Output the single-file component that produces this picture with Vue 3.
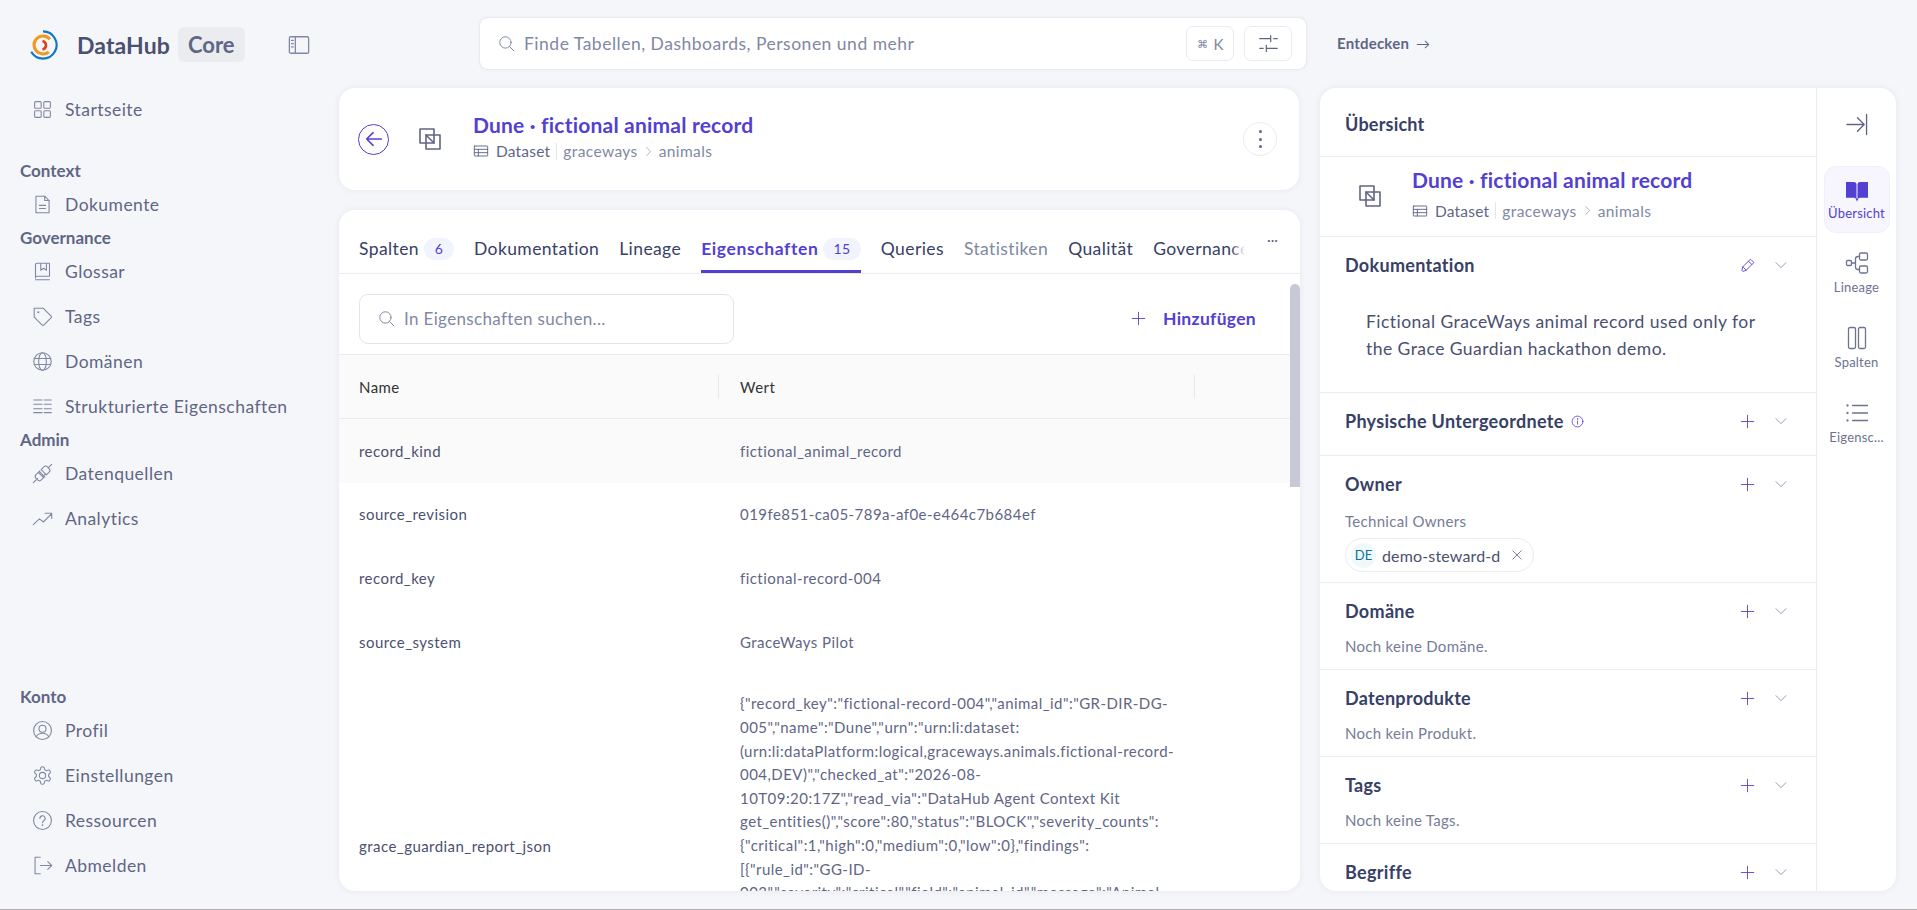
<script setup>
const icons = {
  grid: '<rect x="3" y="3" width="7.5" height="7.5" rx="1.2"/><rect x="13.5" y="3" width="7.5" height="7.5" rx="1.2"/><rect x="3" y="13.5" width="7.5" height="7.5" rx="1.2"/><rect x="13.5" y="13.5" width="7.5" height="7.5" rx="1.2"/>',
  doc: '<path d="M4.5 2.5h10l5 5v14h-15z"/><path d="M14.5 2.5v5h5M8.5 13h7M8.5 16.5h7"/>',
  glossary: '<path d="M4 18.5V4a1.5 1.5 0 0 1 1.5-1.5H20v15H5.5A1.5 1.5 0 0 0 4 19v.5M4 21.5h16M10 2.5v8l3.2-2.2 3.3 2.2v-8"/>',
  tag: '<path d="M2.5 2.5h10.2l9.2 9.2a1.2 1.2 0 0 1 0 1.7l-8.5 8.5a1.2 1.2 0 0 1-1.7 0l-9.2-9.2z"/><circle cx="7.2" cy="7.2" r=".6"/>',
  globe: '<circle cx="12" cy="12" r="10"/><ellipse cx="12" cy="12" rx="4.4" ry="10"/><path d="M2.6 8.5h18.8M2.6 15.5h18.8"/>',
  rows: '<path d="M2 4.5h9.5M14 4.5h8M2 9.5h9.5M14 9.5h8M2 14.5h9.5M14 14.5h8M2 19h9.5M14 19h8"/>',
  plug: '<path d="M1.5 22.5l5-5M22.5 1.5l-4 4M8.8 10.2l6 6M10.5 7.5l6 6 3-3a3 3 0 0 0 0-4.2l-1.8-1.8a3 3 0 0 0-4.2 0zM7.2 10.8l6 6-2.6 2.6a3 3 0 0 1-4.2 0l-1.8-1.8a3 3 0 0 1 0-4.2zM9 9l-2 2M13 15l2-2"/>',
  trend: '<path d="M1.5 19l7-6.5 4.5 3.5 9-9M15 6h7.5v6"/>',
  user: '<circle cx="12" cy="12" r="10.2"/><circle cx="12" cy="10" r="4"/><path d="M4.8 19.2c1.4-2.6 4-4 7.2-4s5.8 1.4 7.2 4"/>',
  gear: '<path d="M12.22 2h-.44a2 2 0 0 0-2 2v.18a2 2 0 0 1-1 1.73l-.43.25a2 2 0 0 1-2 0l-.15-.08a2 2 0 0 0-2.73.73l-.22.38a2 2 0 0 0 .73 2.73l.15.1a2 2 0 0 1 1 1.72v.51a2 2 0 0 1-1 1.74l-.15.09a2 2 0 0 0-.73 2.73l.22.38a2 2 0 0 0 2.73.73l.15-.08a2 2 0 0 1 2 0l.43.25a2 2 0 0 1 1 1.73V20a2 2 0 0 0 2 2h.44a2 2 0 0 0 2-2v-.18a2 2 0 0 1 1-1.73l.43-.25a2 2 0 0 1 2 0l.15.08a2 2 0 0 0 2.73-.73l.22-.39a2 2 0 0 0-.73-2.73l-.15-.08a2 2 0 0 1-1-1.74v-.5a2 2 0 0 1 1-1.74l.15-.09a2 2 0 0 0 .73-2.73l-.22-.38a2 2 0 0 0-2.73-.73l-.15.08a2 2 0 0 1-2 0l-.43-.25a2 2 0 0 1-1-1.73V4a2 2 0 0 0-2-2z"/><circle cx="12" cy="12" r="3.6"/>',
  question: '<circle cx="12" cy="12" r="10.2"/><path d="M9 9.6a3 3 0 1 1 4.4 2.7c-.9.5-1.4 1.1-1.4 2.2"/><circle cx="12" cy="17.4" r=".4"/>',
  signout: '<path d="M9.5 2.5H3.5v19h6M9.5 12h13M18 7.5l4.5 4.5-4.5 4.5"/>',
  search: '<circle cx="10.5" cy="10.5" r="8"/><path d="M16.3 16.3l6 6"/>',
  sidebar: '<rect x="1.5" y="3" width="21" height="18" rx="1.5"/><path d="M8 3v18M3.8 7h2M3.8 10.5h2M3.8 14h2"/>',
  sliders: '<path d="M2 6.5h12M18 6.5h4M14.5 3v7M2 17.5h4M10 17.5h12M9.5 14v7"/>',
  back: '<path d="M20 12H4M11 5l-7 7 7 7"/>',
  overlap: '<rect x="2" y="2" width="14" height="14"/><rect x="8" y="8" width="14" height="14"/><path d="M8 8l8 8"/>',
  table: '<rect x="2" y="4.5" width="20" height="15" rx=".6"/><path d="M2 9.5h20M2 14.5h20M8 9.5v10"/>',
  chevronR: '<path d="M8.5 3.5l8 8.5-8 8.5"/>',
  chevronD: '<path d="M3.5 8l8.5 8.5L20.5 8"/>',
  plus: '<path d="M12 2v20M2 12h20"/>',
  pencil: '<path d="M4 21l-1-1 1.5-6L15.8 2.8a1.4 1.4 0 0 1 2 0l3.4 3.4a1.4 1.4 0 0 1 0 2L10 19.5zM13.5 5l5.5 5.5M4.5 14l5.5 5.5"/>',
  info: '<circle cx="12" cy="12" r="10"/><path d="M12 11v6"/><circle cx="12" cy="7.3" r=".4"/>',
  close: '<path d="M5 5l14 14M19 5L5 19"/>',
  collapse: '<path d="M2 12h18M13 5l7 7-7 7M22.5 1.5v21"/>',
  bookFill: '<path fill="currentColor" stroke="none" d="M1 3h7.5c1.8 0 3 .8 3 2.5V20c-.8-.8-1.8-1.2-3-1.2H1zM23 3h-7.5c-1.8 0-3 .8-3 2.5V20c.8-.8 1.8-1.2 3-1.2H23zM10.5 19.5h3L12 22.5z"/>',
  tree: '<rect x="1.5" y="9.5" width="5" height="5" rx="1.2"/><rect x="14.5" y="2" width="8" height="7" rx="1.5"/><rect x="14.5" y="15" width="8" height="7" rx="1.5"/><path d="M6.5 12h4M14.5 5.5H13a2.5 2.5 0 0 0-2.5 2.5v8a2.5 2.5 0 0 0 2.5 2.5h1.5"/>',
  columns: '<rect x="3.5" y="1.5" width="7" height="21" rx="1.5"/><rect x="13.5" y="1.5" width="7" height="21" rx="1.5"/>',
  list: '<path d="M7.5 4.5h15M7.5 12h15M7.5 19.5h15"/><circle cx="2.5" cy="4.5" r=".5"/><circle cx="2.5" cy="12" r=".5"/><circle cx="2.5" cy="19.5" r=".5"/>'
}

const navGroups = [
  { items: [{ label: 'Startseite', icon: 'grid' }] },
  { title: 'Context', items: [{ label: 'Dokumente', icon: 'doc' }] },
  { title: 'Governance', items: [
    { label: 'Glossar', icon: 'glossary' },
    { label: 'Tags', icon: 'tag' },
    { label: 'Domänen', icon: 'globe' },
    { label: 'Strukturierte Eigenschaften', icon: 'rows' }
  ] },
  { title: 'Admin', items: [
    { label: 'Datenquellen', icon: 'plug' },
    { label: 'Analytics', icon: 'trend' }
  ] }
]

const accountItems = [
  { label: 'Profil', icon: 'user' },
  { label: 'Einstellungen', icon: 'gear' },
  { label: 'Ressourcen', icon: 'question' },
  { label: 'Abmelden', icon: 'signout' }
]

const tabs = [
  { label: 'Spalten', count: 6 },
  { label: 'Dokumentation' },
  { label: 'Lineage' },
  { label: 'Eigenschaften', count: 15, active: true },
  { label: 'Queries' },
  { label: 'Statistiken', disabled: true },
  { label: 'Qualität' },
  { label: 'Governance' }
]

const rows = [
  { name: 'record_kind', value: 'fictional_animal_record', hover: true },
  { name: 'source_revision', value: '019fe851-ca05-789a-af0e-e464c7b684ef' },
  { name: 'record_key', value: 'fictional-record-004' },
  { name: 'source_system', value: 'GraceWays Pilot' }
]

const reportLines = [
  '{"record_key":"fictional-record-004","animal_id":"GR-DIR-DG-',
  '005","name":"Dune","urn":"urn:li:dataset:',
  '(urn:li:dataPlatform:logical,graceways.animals.fictional-record-',
  '004,DEV)","checked_at":"2026-08-',
  '10T09:20:17Z","read_via":"DataHub Agent Context Kit',
  'get_entities()","score":80,"status":"BLOCK","severity_counts":',
  '{"critical":1,"high":0,"medium":0,"low":0},"findings":',
  '[{"rule_id":"GG-ID-',
  '003","severity":"critical","field":"animal_id","message":"Animal',
  'id","evidence":"GR-DIR-DG-005"}]}'
]

const sections = [
  { title: 'Domäne', empty: 'Noch keine Domäne.' },
  { title: 'Datenprodukte', empty: 'Noch kein Produkt.' },
  { title: 'Tags', empty: 'Noch keine Tags.' },
  { title: 'Begriffe' }
]

const railItems = [
  { label: 'Übersicht', icon: 'bookFill', active: true },
  { label: 'Lineage', icon: 'tree' },
  { label: 'Spalten', icon: 'columns' },
  { label: 'Eigensc...', icon: 'list' }
]
</script>

<template>
  <div class="page">
    <aside class="sidebar">
      <div class="brand">
        <svg class="logo" viewBox="0 0 30 30" fill="none">
          <path d="M15 1.4A13.6 13.6 0 1 1 3.2 21.8" stroke="#0c78c9" stroke-width="2.2"/>
          <path d="M21.9 9.2A9 9 0 1 0 20.8 21.9" stroke="#f09a24" stroke-width="3.2"/>
          <path d="M14.5 11A4.4 4.4 0 0 1 14.5 19.6" stroke="#d9401e" stroke-width="2.6"/>
        </svg>
        <span class="brand-name">DataHub</span>
        <span class="brand-badge">Core</span>
        <svg class="ico collapse-btn" viewBox="0 0 24 24" v-html="icons.sidebar"></svg>
      </div>

      <nav class="nav">
        <div v-for="(group, i) in navGroups" :key="i" class="nav-group">
          <div v-if="group.title" class="nav-title">{{ group.title }}</div>
          <a v-for="item in group.items" :key="item.label" class="nav-item">
            <svg class="ico nav-ico" viewBox="0 0 24 24" v-html="icons[item.icon]"></svg>
            {{ item.label }}
          </a>
        </div>
      </nav>

      <div class="nav-group account">
        <div class="nav-title">Konto</div>
        <a v-for="item in accountItems" :key="item.label" class="nav-item">
          <svg class="ico nav-ico" viewBox="0 0 24 24" v-html="icons[item.icon]"></svg>
          {{ item.label }}
        </a>
      </div>
    </aside>

    <div class="main">
      <header class="topbar">
        <div class="search">
          <svg class="ico search-ico" viewBox="0 0 24 24" v-html="icons.search"></svg>
          <span class="search-text">Finde Tabellen, Dashboards, Personen und mehr</span>
          <span class="kbd"><small>⌘</small> K</span>
          <span class="kbd filter">
            <svg class="ico" viewBox="0 0 24 24" v-html="icons.sliders"></svg>
          </span>
        </div>
        <span class="explore">Entdecken <span class="arrow">→</span></span>
      </header>

      <div class="content">
        <div class="left">
          <section class="card head-card">
            <span class="back-btn">
              <svg class="ico" viewBox="0 0 24 24" v-html="icons.back"></svg>
            </span>
            <svg class="ico entity-ico" viewBox="0 0 24 24" v-html="icons.overlap"></svg>
            <div class="entity">
              <div class="entity-title">Dune · fictional animal record</div>
              <div class="entity-sub">
                <svg class="ico table-ico" viewBox="0 0 24 24" v-html="icons.table"></svg>
                <span class="sub-type">Dataset</span>
                <span class="sub-div"></span>
                <span>graceways</span>
                <svg class="ico chev-r" viewBox="0 0 24 24" v-html="icons.chevronR"></svg>
                <span>animals</span>
              </div>
            </div>
            <span class="more-btn"><i></i><i></i><i></i></span>
          </section>

          <section class="card props-card">
            <div class="tabbar">
              <div class="tabs">
                <a v-for="tab in tabs" :key="tab.label" class="tab"
                   :class="{ active: tab.active, disabled: tab.disabled }">
                  {{ tab.label }}
                  <span v-if="tab.count" class="count">{{ tab.count }}</span>
                </a>
                <span class="tabs-fade"></span>
              </div>
              <span class="tabs-more">···</span>
            </div>

            <div class="props-body">
              <div class="toolbar">
                <div class="prop-search">
                  <svg class="ico search-ico" viewBox="0 0 24 24" v-html="icons.search"></svg>
                  In Eigenschaften suchen...
                </div>
                <a class="add-btn">
                  <svg class="ico" viewBox="0 0 24 24" v-html="icons.plus"></svg>
                  Hinzufügen
                </a>
              </div>

              <div class="t-row t-head">
                <div class="t-name">Name</div>
                <div class="t-val">Wert</div>
                <div class="t-last"></div>
              </div>
              <div v-for="row in rows" :key="row.name" class="t-row" :class="{ hover: row.hover }">
                <div class="t-name">{{ row.name }}</div>
                <div class="t-val">{{ row.value }}</div>
              </div>
              <div class="t-row t-big">
                <div class="t-name">grace_guardian_report_json</div>
                <div class="t-val">
                  <div v-for="line in reportLines" :key="line" class="json-line">{{ line }}</div>
                  <div class="json-line">&nbsp;</div>
                  <div class="json-line">&nbsp;</div>
                  <div class="json-line">&nbsp;</div>
                </div>
              </div>
              <span class="thumb"></span>
            </div>
          </section>
        </div>

        <section class="card side-card">
          <div class="side-main">
            <div class="side-head">Übersicht</div>
            <div class="side-entity">
              <svg class="ico entity-ico" viewBox="0 0 24 24" v-html="icons.overlap"></svg>
              <div class="entity">
                <div class="entity-title">Dune · fictional animal record</div>
                <div class="entity-sub side-sub">
                  <svg class="ico table-ico" viewBox="0 0 24 24" v-html="icons.table"></svg>
                  <span class="sub-type">Dataset</span>
                  <span class="sub-div"></span>
                  <span>graceways</span>
                  <svg class="ico chev-r" viewBox="0 0 24 24" v-html="icons.chevronR"></svg>
                  <span>animals</span>
                </div>
              </div>
            </div>

            <div class="sec sec-doc">
              <div class="sec-head">
                <span class="sec-title">Dokumentation</span>
                <svg class="ico act" viewBox="0 0 24 24" v-html="icons.pencil"></svg>
                <svg class="ico chev" viewBox="0 0 24 24" v-html="icons.chevronD"></svg>
              </div>
              <p class="doc-text">Fictional GraceWays animal record used only for the Grace Guardian hackathon demo.</p>
            </div>

            <div class="sec sec-physical">
              <div class="sec-head">
                <span class="sec-title">Physische Untergeordnete</span>
                <svg class="ico info" viewBox="0 0 24 24" v-html="icons.info"></svg>
                <svg class="ico act" viewBox="0 0 24 24" v-html="icons.plus"></svg>
                <svg class="ico chev" viewBox="0 0 24 24" v-html="icons.chevronD"></svg>
              </div>
            </div>

            <div class="sec sec-owner">
              <div class="sec-head">
                <span class="sec-title">Owner</span>
                <svg class="ico act" viewBox="0 0 24 24" v-html="icons.plus"></svg>
                <svg class="ico chev" viewBox="0 0 24 24" v-html="icons.chevronD"></svg>
              </div>
              <div class="sec-note owner-note">Technical Owners</div>
              <span class="chip">
                <span class="avatar">DE</span>
                <span class="chip-name">demo-steward-d</span>
                <svg class="ico chip-x" viewBox="0 0 24 24" v-html="icons.close"></svg>
              </span>
            </div>

            <div v-for="sec in sections" :key="sec.title" class="sec sec-plain">
              <div class="sec-head">
                <span class="sec-title">{{ sec.title }}</span>
                <svg class="ico act" viewBox="0 0 24 24" v-html="icons.plus"></svg>
                <svg class="ico chev" viewBox="0 0 24 24" v-html="icons.chevronD"></svg>
              </div>
              <div v-if="sec.empty" class="sec-note">{{ sec.empty }}</div>
            </div>
          </div>

          <div class="rail">
            <svg class="ico rail-close" viewBox="0 0 24 24" v-html="icons.collapse"></svg>
            <a v-for="item in railItems" :key="item.label" class="rail-item" :class="{ active: item.active }">
              <svg class="ico" viewBox="0 0 24 24" v-html="icons[item.icon]"></svg>
              <span>{{ item.label }}</span>
            </a>
          </div>
        </section>
      </div>
    </div>
  </div>
</template>

<style>
html, body {
  margin: 0;
  overflow: hidden;
}
</style>

<style scoped>
.page {
  display: flex;
  height: 909px;
  border-bottom: 1px solid #b5aeae;
  background: #f5f6fa;
  font-family: "Lato", "Noto Sans", sans-serif;
  color: #5f6685;
  overflow: hidden;
}
.ico {
  display: block;
  flex: none;
  fill: none;
  stroke: currentColor;
  stroke-width: 1.4;
  stroke-linecap: round;
  stroke-linejoin: round;
}

/* sidebar */
.sidebar {
  width: 339px;
  flex: none;
  box-sizing: border-box;
  padding: 27px 0 27px 20px;
  display: flex;
  flex-direction: column;
}
.brand {
  display: flex;
  align-items: center;
  height: 35px;
  padding-left: 8px;
}
.logo {
  width: 30px;
  height: 30px;
  margin-right: 19px;
  flex: none;
}
.brand-name {
  font-size: 23px;
  font-weight: 700;
  color: #4a5070;
  letter-spacing: 0.1px;
}
.brand-badge {
  margin-left: 8px;
  padding: 0 10px;
  height: 35px;
  line-height: 35px;
  border-radius: 6px;
  background: #ebecf0;
  font-size: 22px;
  font-weight: 700;
  color: #5f6685;
}
.collapse-btn {
  width: 22px;
  height: 22px;
  margin-left: 43px;
  color: #8088a3;
}
.nav {
  margin-top: 30px;
  display: flex;
  flex-direction: column;
}
.nav-group {
  display: flex;
  flex-direction: column;
  gap: 11px;
}
.nav-group:nth-child(2) {
  margin-top: 28px;
}
.nav-title {
  height: 33px;
  margin-bottom: -11px;
  line-height: 33px;
  font-size: 17px;
  font-weight: 700;
  color: #5f6685;
}
.nav-item {
  height: 34px;
  display: flex;
  align-items: center;
  gap: 12px;
  padding-left: 12px;
  font-size: 17.5px;
  letter-spacing: 0.45px;
  color: #5f6685;
}
.nav-ico {
  width: 21px;
  height: 21px;
  color: #8088a3;
  stroke-width: 1.25;
}
.account {
  margin-top: auto;
}

/* top */
.main {
  flex: 1;
  min-width: 0;
  display: flex;
  flex-direction: column;
  padding: 0 21px 18px 0;
}
.topbar {
  height: 88px;
  flex: none;
  display: flex;
  padding-left: 141px;
  box-sizing: border-box;
  padding-top: 18px;
}
.search {
  width: 826px;
  height: 51px;
  box-sizing: border-box;
  display: flex;
  align-items: center;
  padding: 0 14px 0 18px;
  background: #fff;
  border-radius: 8px;
  box-shadow: 0 0 3px rgba(60, 65, 100, 0.16);
}
.search-ico {
  width: 17px;
  height: 17px;
  color: #8088a3;
}
.search-text {
  flex: 1;
  margin-left: 9px;
  font-size: 17.5px;
  letter-spacing: 0.5px;
  color: #8088a3;
}
.kbd {
  width: 48px;
  height: 35px;
  box-sizing: border-box;
  display: flex;
  align-items: center;
  justify-content: center;
  gap: 6px;
  border: 1px solid #ebecf0;
  border-radius: 7px;
  font-size: 15px;
  color: #8088a3;
}
.kbd small {
  font-size: 11px;
}
.filter {
  margin-left: 10px;
  color: #5f6685;
}
.filter svg {
  width: 21px;
  height: 21px;
}
.explore {
  margin-left: 31px;
  height: 51px;
  line-height: 51px;
  font-size: 15px;
  font-weight: 700;
  letter-spacing: 0.2px;
  color: #5f6685;
  white-space: nowrap;
}
.arrow {
  margin-left: 3px;
  font-weight: 400;
  font-size: 14px;
}

/* cards */
.content {
  flex: 1;
  min-height: 0;
  display: flex;
  gap: 20px;
}
.left {
  width: 961px;
  flex: none;
  display: flex;
  flex-direction: column;
  gap: 20px;
}
.card {
  background: #fff;
  border-radius: 16px;
  box-shadow: 0 0 6px rgba(60, 65, 100, 0.08);
}
.head-card {
  height: 102px;
  flex: none;
  display: flex;
  align-items: center;
  margin-right: 1px;
  padding: 0 22px 0 19px;
}
.back-btn {
  width: 31px;
  height: 31px;
  box-sizing: border-box;
  display: flex;
  align-items: center;
  justify-content: center;
  border: 1px solid #533fd1;
  border-radius: 50%;
  color: #533fd1;
}
.back-btn svg {
  width: 22px;
  height: 22px;
  stroke-width: 1.7;
}
.entity-ico {
  width: 24px;
  height: 24px;
  margin-left: 29px;
  color: #5f6685;
  stroke-width: 1.6;
}
.entity {
  margin-left: 31px;
  flex: 1;
  min-width: 0;
}
.head-card .entity {
  padding-bottom: 6px;
}
.entity-title {
  font-size: 21px;
  font-weight: 700;
  color: #533fd1;
  letter-spacing: 0.2px;
  line-height: 28px;
}
.entity-sub {
  display: flex;
  align-items: center;
  height: 20px;
  margin-top: 2px;
  font-size: 15.5px;
  color: #8088a3;
  letter-spacing: 0.4px;
}
.side-sub {
  margin-top: 7px;
}
.table-ico {
  width: 16px;
  height: 16px;
  margin-right: 7px;
  color: #5f6685;
}
.sub-type {
  color: #5f6685;
  letter-spacing: 0.2px;
}
.sub-div {
  width: 1px;
  height: 17px;
  margin: 0 6px;
  background: #e4e5ea;
}
.chev-r {
  width: 11px;
  height: 11px;
  margin: 0 5px;
}
.more-btn {
  width: 34px;
  height: 34px;
  box-sizing: border-box;
  display: flex;
  flex-direction: column;
  align-items: center;
  justify-content: center;
  gap: 4.5px;
  border: 1px solid #ebecf0;
  border-radius: 50%;
}
.more-btn i {
  width: 3px;
  height: 3px;
  border-radius: 50%;
  background: #5f6685;
}

/* tabs */
.props-card {
  flex: 1;
  min-height: 0;
  display: flex;
  flex-direction: column;
  overflow: hidden;
}
.tabbar {
  height: 64px;
  flex: none;
  display: flex;
  box-sizing: border-box;
  border-bottom: 1px solid #ebecf0;
  padding-left: 20px;
}
.tabs {
  position: relative;
  flex: 1;
  min-width: 0;
  display: flex;
  gap: 20px;
  overflow: hidden;
  padding-top: 15px;
}
.tab {
  display: flex;
  align-items: flex-start;
  gap: 5px;
  height: 48px;
  box-sizing: border-box;
  flex: none;
  line-height: 48px;
  font-size: 17.5px;
  letter-spacing: 0.4px;
  color: #374066;
  white-space: nowrap;
}
.tab.disabled {
  color: #8088a3;
}
.tab.active {
  color: #533fd1;
  font-weight: 700;
  border-bottom: 3px solid #533fd1;
  letter-spacing: 0.6px;
}
.count {
  margin-top: 13px;
  min-width: 30px;
  box-sizing: border-box;
  padding: 0 10px;
  height: 22px;
  line-height: 22px;
  text-align: center;
  border-radius: 11px;
  background: #f1f3fd;
  color: #533fd1;
  font-size: 14px;
  font-weight: 400;
}
.tabs-fade {
  position: absolute;
  right: 0;
  top: 15px;
  bottom: 0;
  width: 14px;
  background: linear-gradient(to right, rgba(255, 255, 255, 0), #fff);
}
.tabs-more {
  width: 55px;
  flex: none;
  text-align: center;
  line-height: 60px;
  font-size: 14px;
  color: #5f6685;
}

/* table */
.props-body {
  position: relative;
  flex: 1;
  min-height: 0;
  overflow: hidden;
}
.toolbar {
  height: 80px;
  box-sizing: border-box;
  display: flex;
  align-items: center;
  justify-content: space-between;
  padding: 9px 44px 0 20px;
}
.prop-search {
  width: 375px;
  height: 50px;
  box-sizing: border-box;
  display: flex;
  align-items: center;
  gap: 9px;
  padding-left: 18px;
  border: 1px solid #e4e5ea;
  border-radius: 9px;
  font-size: 17px;
  letter-spacing: 0.35px;
  color: #8088a3;
}
.add-btn {
  display: flex;
  align-items: center;
  gap: 17px;
  font-size: 17.5px;
  font-weight: 700;
  letter-spacing: 0.3px;
  color: #533fd1;
}
.add-btn svg {
  width: 15px;
  height: 15px;
}
.t-row {
  display: grid;
  grid-template-columns: 380px 476px 1fr;
  align-items: center;
  height: 63.6px;
  font-size: 15px;
  letter-spacing: 0.45px;
}
.t-row.hover {
  background: #fafafa;
}
.t-name {
  padding-left: 20px;
  color: #4a5070;
}
.t-val {
  padding: 0 20px 0 21px;
  color: #5f6685;
}
.t-head {
  height: 65px;
  background: #fafafa;
  border-top: 1px solid #ebecf0;
  border-bottom: 1px solid #ebecf0;
  box-sizing: border-box;
  color: #333;
}
.t-head .t-name,
.t-head .t-val {
  color: #333;
  position: relative;
}
.t-head .t-val::before,
.t-head .t-val::after {
  content: "";
  position: absolute;
  top: -3px;
  width: 1px;
  height: 24px;
  background: #e8e8e8;
}
.t-head .t-val::before {
  left: -1px;
}
.t-head .t-val::after {
  right: 0;
}
.t-big {
  height: auto;
  padding: 19px 0;
}
.json-line {
  height: 23.6px;
  line-height: 23.6px;
  white-space: nowrap;
}
.thumb {
  position: absolute;
  top: 10px;
  right: 0;
  width: 10px;
  height: 203px;
  border-radius: 5px 5px 0 0;
  background: #c8c9d6;
}

/* right panel */
.side-card {
  flex: 1;
  min-width: 0;
  display: flex;
  overflow: hidden;
}
.side-main {
  flex: 1;
  min-width: 0;
  overflow: hidden;
}
.side-head {
  height: 69px;
  box-sizing: border-box;
  padding: 0 25px;
  line-height: 72px;
  font-size: 18px;
  font-weight: 700;
  letter-spacing: 0.2px;
  color: #374066;
  border-bottom: 1px solid #ebecf0;
}
.side-entity {
  height: 80px;
  box-sizing: border-box;
  display: flex;
  align-items: center;
  padding-bottom: 7px;
  border-bottom: 1px solid #ebecf0;
}
.side-entity .entity-ico {
  margin-left: 38px;
  margin-top: 6px;
}
.side-entity .entity {
  margin-left: 30px;
}
.sec {
  box-sizing: border-box;
  padding: 16px 20px 0 25px;
  border-bottom: 1px solid #ebecf0;
}
.sec-doc {
  height: 156px;
}
.sec-physical {
  height: 63px;
}
.sec-owner {
  height: 127px;
}
.sec-plain {
  height: 87px;
}
.sec-head {
  display: flex;
  align-items: center;
  height: 24px;
}
.sec-title {
  font-size: 18px;
  font-weight: 700;
  letter-spacing: 0.3px;
  color: #374066;
}
.info {
  width: 13px;
  height: 13px;
  margin-left: 7px;
  color: #533fd1;
  stroke-width: 1.5;
}
.act {
  width: 15px;
  height: 15px;
  margin-left: auto;
  color: #533fd1;
}
.chev {
  width: 14px;
  height: 14px;
  margin-left: 19px;
  margin-right: 8px;
  color: #8088a3;
}
.doc-text {
  margin: 32px 0 0 21px;
  width: 395px;
  font-size: 17.5px;
  letter-spacing: 0.45px;
  line-height: 26.5px;
  color: #4a5070;
}
.sec-note {
  margin-top: 13px;
  line-height: 20px;
  font-size: 15px;
  color: #767c97;
  letter-spacing: 0.3px;
}
.owner-note {
  margin-top: 15px;
}
.chip {
  display: inline-flex;
  align-items: center;
  height: 34px;
  margin-top: 7px;
  box-sizing: border-box;
  padding: 0 9px 0 5px;
  border: 1px solid #ebecf0;
  border-radius: 17px;
}
.avatar {
  width: 25px;
  height: 25px;
  border-radius: 50%;
  text-align: center;
  line-height: 24px;
  background: #f0f8fb;
  color: #09739a;
  font-size: 13px;
}
.chip-name {
  margin-left: 6px;
  font-size: 16px;
  letter-spacing: 0.15px;
  color: #4a5070;
}
.chip-x {
  width: 14px;
  height: 14px;
  margin-left: 10px;
}

/* rail */
.rail {
  width: 80px;
  flex: none;
  box-sizing: border-box;
  border-left: 1px solid #ebecf0;
  display: flex;
  flex-direction: column;
  align-items: center;
  gap: 8px;
  padding-top: 78px;
  position: relative;
}
.rail-close {
  position: absolute;
  top: 25px;
  left: 28px;
  width: 23px;
  height: 23px;
  color: #5f6685;
}
.rail-item {
  width: 66px;
  height: 67px;
  box-sizing: border-box;
  display: flex;
  flex-direction: column;
  align-items: center;
  padding-top: 9px;
  gap: 4px;
  border: 1px solid transparent;
  border-radius: 12px;
  font-size: 13px;
  letter-spacing: 0.2px;
  white-space: nowrap;
  color: #6d7390;
}
.rail-item svg {
  width: 24px;
  height: 24px;
  stroke-width: 1.3;
}
.rail-item.active {
  padding-top: 12px;
  gap: 2px;
  background: #f7f6fe;
  border-color: #f1effc;
  color: #533fd1;
}
</style>
